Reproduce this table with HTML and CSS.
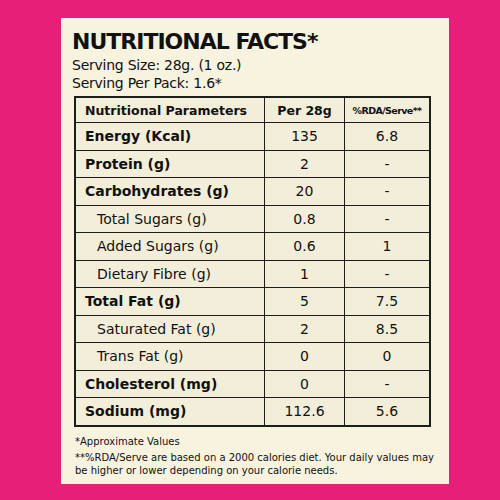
FILE: index.html
```html
<!DOCTYPE html>
<html lang="en">
<head>
    <meta charset="UTF-8">
    <meta name="viewport" content="width=device-width, initial-scale=1.0">
    <title>Nutritional Facts</title>
    <link rel="stylesheet" href="styles.css">
</head>
<body>
    <div class="card">
        <h1>NUTRITIONAL FACTS*</h1>
        <p class="serving">Serving Size: 28g. (1 oz.)</p>
        <p class="serving">Serving Per Pack: 1.6*</p>

        <table class="facts">
            <thead>
                <tr>
                    <th class="param">Nutritional Parameters</th>
                    <th>Per 28g</th>
                    <th class="rda">%RDA/Serve**</th>
                </tr>
            </thead>
            <tbody>
                <tr><td class="main">Energy (Kcal)</td><td>135</td><td>6.8</td></tr>
                <tr><td class="main">Protein (g)</td><td>2</td><td>-</td></tr>
                <tr><td class="main">Carbohydrates (g)</td><td>20</td><td>-</td></tr>
                <tr><td class="sub">Total Sugars (g)</td><td>0.8</td><td>-</td></tr>
                <tr><td class="sub">Added Sugars (g)</td><td>0.6</td><td>1</td></tr>
                <tr><td class="sub">Dietary Fibre (g)</td><td>1</td><td>-</td></tr>
                <tr><td class="main">Total Fat (g)</td><td>5</td><td>7.5</td></tr>
                <tr><td class="sub">Saturated Fat (g)</td><td>2</td><td>8.5</td></tr>
                <tr><td class="sub">Trans Fat (g)</td><td>0</td><td>0</td></tr>
                <tr><td class="main">Cholesterol (mg)</td><td>0</td><td>-</td></tr>
                <tr><td class="main">Sodium (mg)</td><td>112.6</td><td>5.6</td></tr>
            </tbody>
        </table>

        <div class="notes">
            <p>*Approximate Values</p>
            <p>**%RDA/Serve are based on a 2000 calories diet. Your daily values may be higher or lower depending on your calorie needs.</p>
        </div>
    </div>
</body>
</html>
```

FILE: styles.css
```css
body {
    font-family: "DejaVu Sans", "Noto Sans", sans-serif;
    margin: 0;
    padding: 18px 0 0 61px;
    background-color: #e61f78;
    color: #111;
}
.card {
    width: 388px;
    height: 466px;
    box-sizing: border-box;
    background: #f7f3df;
    padding: 10px 0 0 11px;
}
h1 {
    margin: 0;
    font-size: 22px;
    font-weight: bold;
    line-height: 28px;
    letter-spacing: -1px;
}
.serving {
    margin: 0;
    font-size: 14px;
    line-height: 18px;
    letter-spacing: -0.25px;
}
.facts {
    width: 357px;
    margin: 4px 0 0 2px;
    border-collapse: collapse;
    border: 2px solid #1d1d1b;
}
.facts th,
.facts td {
    border: 1.5px solid #1d1d1b;
    text-align: center;
    padding: 0;
    height: 26.5px;
    font-size: 14px;
    background: #f2eed9;
}
.facts th {
    height: 24px;
    font-size: 12.5px;
}
.facts th:nth-child(1) { width: 179px; }
.facts th:nth-child(2) { width: 79px; }
.facts .param {
    text-align: left;
    padding-left: 9px;
}
.facts .rda {
    font-size: 9.5px;
    letter-spacing: -0.6px;
}
.facts .main {
    text-align: left;
    padding-left: 9px;
    font-weight: bold;
}
.facts .sub {
    text-align: left;
    padding-left: 21px;
}
.notes {
    width: 362px;
    margin: 9px 0 0 3px;
    font-size: 10px;
    line-height: 12.5px;
}
.notes p {
    margin: 0 0 4px;
}
```
